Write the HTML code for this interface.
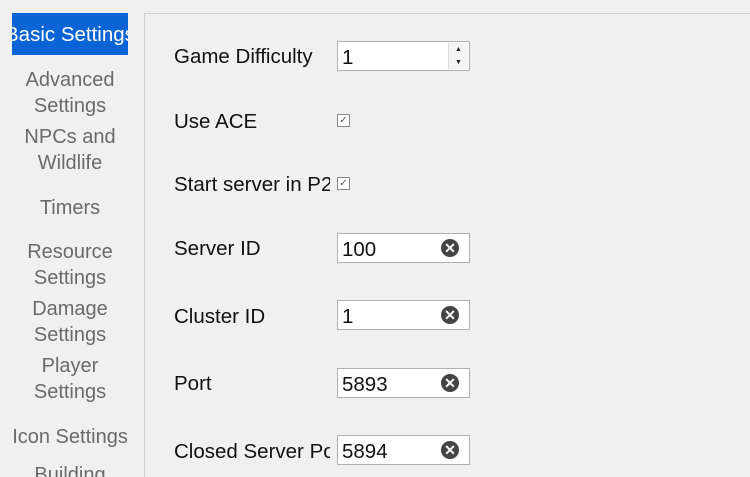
<!DOCTYPE html><html><head><style>
html,body{margin:0;width:750px;height:477px;overflow:hidden}
body{background:#f0f0f0;position:relative;font-family:"Liberation Sans",sans-serif;}
.a{position:absolute;white-space:nowrap}
.l{font-size:20.5px;color:#111;left:174px;transform:translateY(-50%);margin-top:1px}
.n{font-size:20px;color:#6a6a6a;width:140px;text-align:center;left:0;line-height:26px;transform:translateY(-12px)}
.in{position:absolute;left:337px;width:133px;height:30px;background:#fff;border:1px solid #b0b0b0;box-sizing:border-box;}
.in span{position:absolute;left:4px;top:4px;font-size:20.5px;color:#111}
.x{position:absolute;right:10px;top:5px;width:18px;height:18px;border-radius:50%;background:#444;color:#fff;font-size:14px;font-weight:bold;line-height:18px;text-align:center}
.cb{position:absolute;left:337px;width:13px;height:13px;border:1px solid #888;background:#fff;box-sizing:border-box;font-size:10px;line-height:11px;text-align:center;color:#555}
</style></head><body>
<div class="a" style="left:144px;top:13px;width:610px;height:464px;border-top:1px solid #d0d0d0;border-left:1px solid #d0d0d0"></div>
<div class="a" style="left:12px;top:13px;width:116px;height:42px;background:#0a64d6;overflow:hidden"><div style="position:absolute;left:-7px;top:10px;font-size:20.5px;color:#fff">Basic Settings</div></div>
<div class="a n" style="top:79px">Advanced</div><div class="a n" style="top:105px">Settings</div>
<div class="a n" style="top:136px">NPCs and</div><div class="a n" style="top:162px">Wildlife</div>
<div class="a n" style="top:207px">Timers</div>
<div class="a n" style="top:251px">Resource</div><div class="a n" style="top:277px">Settings</div>
<div class="a n" style="top:308px">Damage</div><div class="a n" style="top:334px">Settings</div>
<div class="a n" style="top:365px">Player</div><div class="a n" style="top:391px">Settings</div>
<div class="a n" style="top:436px">Icon Settings</div>
<div class="a n" style="top:474px">Building</div>
<div class="a l" style="top:56px">Game Difficulty</div>
<div class="a l" style="top:121px">Use ACE</div>
<div class="a l" style="top:184px;width:156px;overflow:hidden">Start server in P2P</div>
<div class="a l" style="top:248px">Server ID</div>
<div class="a l" style="top:316px">Cluster ID</div>
<div class="a l" style="top:383px">Port</div>
<div class="a l" style="top:451px;width:156px;overflow:hidden">Closed Server Port</div>
<div class="in" style="top:41px"><span>1</span><div style="position:absolute;right:1px;top:1px;width:19px;height:26px;background:#f4f4f4;border-left:1px solid #ddd;font-size:7px;line-height:13px;text-align:center;color:#222">▲<br>▼</div></div>
<div class="cb" style="top:114px">✓</div>
<div class="cb" style="top:177px">✓</div>
<div class="in" style="top:233px"><span>100</span><div class="x">✕</div></div>
<div class="in" style="top:300px"><span>1</span><div class="x">✕</div></div>
<div class="in" style="top:368px"><span>5893</span><div class="x">✕</div></div>
<div class="in" style="top:435px"><span>5894</span><div class="x">✕</div></div>
</body></html>
